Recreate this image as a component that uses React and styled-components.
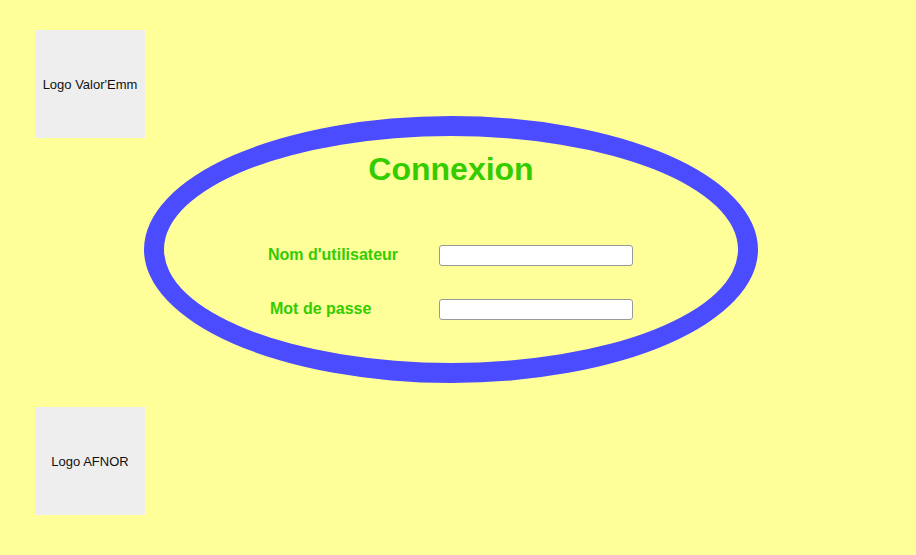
import styled, { createGlobalStyle } from 'styled-components';

const GlobalStyle = createGlobalStyle`
  html, body {
    margin: 0;
    padding: 0;
    background-color: #ffff99;
    font-family: "Liberation Sans", Arial, sans-serif;
  }
`;

const Page = styled.div`
  display: flex;
  align-items: flex-start;
  padding: 30px 0 0 35px;
  min-height: 555px;
  box-sizing: border-box;
`;

/**
 * colonne des logos
 */
const LogoColumn = styled.div`
  width: 109px;
  display: flex;
  flex-direction: column;
  gap: 269px;
`;

const LogoBox = styled.div`
  width: 110px;
  height: 108px;
  background-color: #eeeeee;
  display: flex;
  align-items: center;
  justify-content: center;
  font-size: 13px;
  color: #111;
`;

/**
 * cadre ovale de connexion
 */
const Oval = styled.div`
  width: 574px;
  height: 212px;
  margin-top: 86px;
  border: 20px solid #4b4bff;
  border-radius: 50%;
  display: flex;
  flex-direction: column;
  align-items: center;
  padding-top: 15px;
  box-sizing: content-box;
`;

const Title = styled.h1`
  margin: 0;
  font-size: 32px;
  font-weight: 700;
  color: #33cc00;
`;

const Form = styled.form`
  margin-top: 57px;
  padding-right: 1px;
  display: grid;
  grid-template-columns: 171px 194px;
  row-gap: 33px;
  align-items: baseline;
`;

const Label = styled.label`
  font-size: 16px;
  font-weight: 700;
  color: #33cc00;
  padding-left: ${({ shift }) => shift || 0}px;
`;

const TextInput = styled.input`
  width: 194px;
  height: 21px;
  box-sizing: border-box;
  border: 1px solid #999;
  border-radius: 3px;
  background-color: #fff;
  padding: 1px 2px;
  font-size: 13.33px;
  font-family: "Liberation Sans", Arial, sans-serif;
`;

export default function App() {
  return (
    <>
      <GlobalStyle />
      <Page>
        <LogoColumn>
          <LogoBox>Logo Valor'Emm</LogoBox>
          <LogoBox>Logo AFNOR</LogoBox>
        </LogoColumn>

        <Oval>
          <Title>Connexion</Title>
          <Form>
            <Label htmlFor="user">Nom d'utilisateur</Label>
            <TextInput id="user" type="text" />
            <Label htmlFor="pass" shift={2}>Mot de passe</Label>
            <TextInput id="pass" type="password" />
          </Form>
        </Oval>
      </Page>
    </>
  );
}
